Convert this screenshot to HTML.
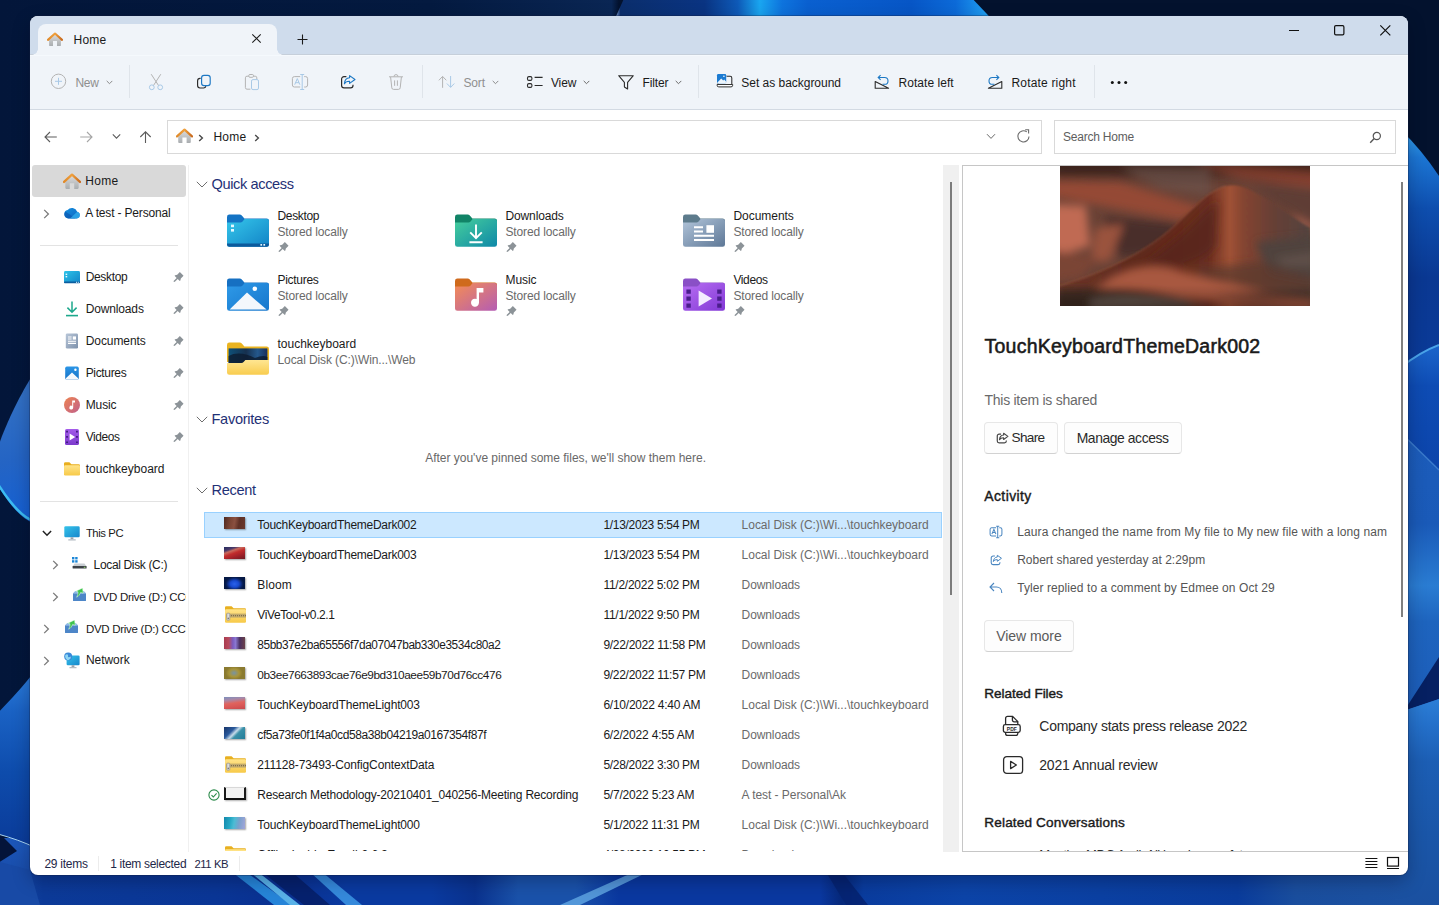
<!DOCTYPE html>
<html lang="en">
<head>
<meta charset="utf-8">
<title>Home - File Explorer</title>
<style>
*{box-sizing:border-box;margin:0;padding:0}
html,body{width:1439px;height:905px;overflow:hidden;background:#03163a}
body{font-family:"Liberation Sans",sans-serif;font-size:12px;color:#1a1a1a;position:relative}
.abs,.abs>*{position:absolute}
#wall{position:absolute;left:0;top:0;width:1439px;height:905px}
#win{position:absolute;left:30px;top:16px;width:1378px;height:859px;border-radius:8px;overflow:hidden;background:#fff;box-shadow:0 0 0 1px rgba(20,30,60,.3),0 6px 18px rgba(0,0,20,.28)}
#in{position:absolute;left:-30px;top:-16px;width:1439px;height:905px}
#in *{position:absolute}
.t{white-space:pre;line-height:16px;height:16px}
/* title bar */
#titlebar{left:30px;top:16px;width:1378px;height:39px;background:#cfdcec}
#tab{left:38px;top:24px;width:239px;height:31px;background:#f0f4f9;border-radius:8px 8px 0 0}
.tabfoot{width:6px;height:6px;top:49px;background:radial-gradient(circle at 0 0,rgba(0,0,0,0) 5.5px,#f0f4f9 6px)}
/* toolbar */
#toolbar{left:30px;top:55px;width:1378px;height:55px;background:#f0f4f9;border-bottom:1px solid #d3dae3}
.sep{width:1px;height:33px;top:65px;background:#dfe4ea}
.tb{top:74px;font-size:12px;color:#1a1a1a}
.dis{color:#9a9a9a}
/* nav */
.box{top:120px;height:34px;border:1px solid #d9d9d9;background:#fff}
/* sidebar */
.sb{left:85px;font-size:12px;color:#1a1a1a}
.hr{height:1px;background:#e3e3e3;left:40px;width:138px}
/* main */
.h{font-size:15px;color:#1f3278;line-height:20px;height:20px;white-space:pre}
.nm{color:#111}
.sub{color:#6d6d6d}
.row{left:204px;width:738px;height:26px}
.c1{left:257px}.c2{left:603px}.c3{left:741px;color:#6d6d6d}
/* preview */
.btn{border:1px solid #e7e7e7;border-bottom-color:#d2d2d2;border-radius:4px;background:#fdfdfd;height:32px}
.p14{font-size:14px;line-height:18px;height:18px;white-space:pre}
.p12{font-size:12px;line-height:16px;height:16px;white-space:pre;color:#505050}
.bold{font-weight:700}
</style>
</head>
<body>
<svg id="wall" viewBox="0 0 1439 905"><defs>
<linearGradient id="gBase" x1="0" x2="1439" y1="0" y2="0" gradientUnits="userSpaceOnUse"><stop offset="0" stop-color="#03163a"/><stop offset=".3" stop-color="#041a40"/><stop offset=".425" stop-color="#0a2654"/><stop offset=".43" stop-color="#03122e"/><stop offset="1" stop-color="#03122e"/></linearGradient>
<linearGradient id="gTop" x1="616" x2="985" y1="0" y2="0" gradientUnits="userSpaceOnUse">
<stop offset="0" stop-color="#7c9cd0"/><stop offset=".012" stop-color="#0b2e6c"/><stop offset=".24" stop-color="#0a3482"/><stop offset=".33" stop-color="#0e5ab8"/><stop offset=".39" stop-color="#1aa6f0"/><stop offset=".45" stop-color="#0e74de"/><stop offset=".52" stop-color="#0a60d0"/><stop offset=".8" stop-color="#0756c6"/><stop offset=".92" stop-color="#0c6ad8"/><stop offset="1" stop-color="#1e9cf0"/>
</linearGradient>
<linearGradient id="gL1" x1="0" x2="30" y1="400" y2="520" gradientUnits="userSpaceOnUse">
<stop offset="0" stop-color="#3270c4"/><stop offset=".5" stop-color="#2464c4"/><stop offset="1" stop-color="#1460d4"/>
</linearGradient>
<linearGradient id="gL2" x1="0" x2="0" y1="677" y2="850" gradientUnits="userSpaceOnUse">
<stop offset="0" stop-color="#2a7ad8"/><stop offset=".2" stop-color="#1a62c4"/><stop offset=".55" stop-color="#0e4cac"/><stop offset="1" stop-color="#0a3a98"/>
</linearGradient>
<linearGradient id="gBot" x1="0" x2="1439" y1="0" y2="0" gradientUnits="userSpaceOnUse">
<stop offset="0" stop-color="#1a4aa2"/><stop offset=".03" stop-color="#0c3a98"/><stop offset=".15" stop-color="#0a3696"/><stop offset=".2" stop-color="#0a3090"/><stop offset=".24" stop-color="#0a3aa0"/><stop offset=".3" stop-color="#0a3aa0"/><stop offset=".33" stop-color="#0a328e"/><stop offset=".36" stop-color="#1a52aa"/><stop offset=".4" stop-color="#1a52aa"/><stop offset=".43" stop-color="#0a38a0"/><stop offset=".57" stop-color="#0a38a0"/><stop offset=".585" stop-color="#06287a"/><stop offset=".6" stop-color="#0a3c9e"/><stop offset=".67" stop-color="#0c44a8"/><stop offset=".86" stop-color="#0a3c9c"/><stop offset=".9" stop-color="#1a4e9e"/><stop offset="1" stop-color="#1c52a2"/>
</linearGradient>
<linearGradient id="gR" x1="0" x2="0" y1="139" y2="905" gradientUnits="userSpaceOnUse">
<stop offset="0" stop-color="#2a94e6"/><stop offset=".03" stop-color="#1a72d0"/><stop offset=".1" stop-color="#0c48a8"/><stop offset=".2" stop-color="#0a3690"/><stop offset=".275" stop-color="#0a3a98"/><stop offset=".285" stop-color="#3a9ae2"/><stop offset=".3" stop-color="#0e4cb4"/><stop offset=".39" stop-color="#0c46ac"/><stop offset=".4" stop-color="#2a6cc4"/><stop offset=".42" stop-color="#1a5ab8"/><stop offset=".5" stop-color="#1a5ab8"/><stop offset=".57" stop-color="#2a7ad0"/><stop offset=".62" stop-color="#1e62bc"/><stop offset=".72" stop-color="#1c5cb8"/><stop offset=".74" stop-color="#2a7ad2"/><stop offset=".8" stop-color="#1c5eb2"/><stop offset=".9" stop-color="#1a56a8"/><stop offset="1" stop-color="#1a50a0"/>
</linearGradient>
<linearGradient id="gR1" x1="0" x2="0" y1="139" y2="370" gradientUnits="userSpaceOnUse"><stop offset="0" stop-color="#2e98e8"/><stop offset=".08" stop-color="#1c76d4"/><stop offset=".3" stop-color="#0e4eae"/><stop offset=".6" stop-color="#0a3892"/><stop offset="1" stop-color="#0a3a98"/></linearGradient>
<linearGradient id="gR2" x1="0" x2="0" y1="350" y2="470" gradientUnits="userSpaceOnUse"><stop offset="0" stop-color="#1a62c8"/><stop offset=".3" stop-color="#0e4cb4"/><stop offset="1" stop-color="#0c44aa"/></linearGradient>
<linearGradient id="gR3" x1="0" x2="0" y1="440" y2="720" gradientUnits="userSpaceOnUse"><stop offset="0" stop-color="#1c5cba"/><stop offset=".3" stop-color="#1a5ab8"/><stop offset=".52" stop-color="#2a7cd2"/><stop offset=".65" stop-color="#1e64be"/><stop offset="1" stop-color="#1c5cb8"/></linearGradient>
<linearGradient id="gR4" x1="0" x2="0" y1="700" y2="905" gradientUnits="userSpaceOnUse"><stop offset="0" stop-color="#2c7ed6"/><stop offset=".12" stop-color="#2470ca"/><stop offset=".3" stop-color="#1c5eb4"/><stop offset=".65" stop-color="#1a56a8"/><stop offset="1" stop-color="#1a50a0"/></linearGradient>
<linearGradient id="gLB" x1="0" x2="0" y1="845" y2="880" gradientUnits="userSpaceOnUse"><stop offset="0" stop-color="#1c56b8"/><stop offset="1" stop-color="#184aa6"/></linearGradient>
</defs>
<rect width="1439" height="905" fill="url(#gBase)"/>
<polygon points="626,-6 968,-6 1004,32 609,32" fill="url(#gTop)"/>
<path d="M34,373 C24,388 8,418 -2,447 L-2,486 C10,505 22,520 36,524 Z" fill="url(#gL1)"/>
<path d="M-2,484 C10,503 22,518 36,522" stroke="#3cbcf0" stroke-width="2.2" fill="none"/>
<path d="M-2,838 L40,838 L40,880 L-2,880Z" fill="url(#gLB)"/>
<path d="M-2,832 L17,851 L-2,863Z" fill="#04143a"/>
<path d="M34,672 C22,688 10,700 -2,713 L-2,834 C12,838 24,842 36,848 Z" fill="url(#gL2)"/>
<path d="M-2,834 C12,838 24,842 36,848" stroke="#a8d4f2" stroke-width="1" fill="none"/>
<rect x="0" y="872" width="1439" height="33" fill="url(#gBot)"/>
<path d="M0,862 L30,870 L40,905 L0,905Z" fill="#184aa6"/>
<g opacity=".9"><polygon points="232,872 246,872 292,905 274,905" fill="#2a8ee0"/><polygon points="250,872 258,872 300,905 290,905" fill="#62c0f2"/><polygon points="262,872 292,872 330,905 304,905" fill="#06206a"/><polygon points="310,872 322,872 362,905 346,905" fill="#3a92e2"/><polygon points="560,905 580,905 648,872 634,872" fill="#5a9ede"/><polygon points="826,872 842,872 868,905 846,905" fill="#052472"/></g>
<g>
<path d="M1400,129 Q1422,150 1439,176 L1439,905 L1400,905Z" fill="url(#gR1)"/>
<path d="M1400,368 Q1420,352 1439,345 L1439,480 L1400,440Z" fill="url(#gR2)"/>
<path d="M1400,368 Q1420,352 1439,345" stroke="#4aa4ea" stroke-width="2" fill="none"/>
<path d="M1400,432 L1439,470 L1439,720 L1400,720Z" fill="url(#gR3)"/>
<path d="M1400,432 L1439,470" stroke="#3a7acc" stroke-width="1.5" fill="none"/>
<polygon points="1404,711 1439,657 1439,699" fill="#062062"/>
<path d="M1400,712 L1439,699 L1439,905 L1400,905Z" fill="url(#gR4)"/>
</g>
</svg>
<div id="win"><div id="in">
<!-- p_top -->
<div id="titlebar"></div>
<div style="left:30px;top:54px;width:1378px;height:1px;background:#c6cfda"></div><div style="left:30px;top:55px;width:1378px;height:1px;background:#f5f9fd;z-index:1"></div>
<div id="tab"></div>
<div class="tabfoot" style="left:32px"></div>
<div class="tabfoot" style="left:277px;background:radial-gradient(circle at 100% 0,rgba(0,0,0,0) 5.5px,#f0f4f9 6px)"></div>
<svg style="left:47px;top:32px" width="16" height="15" viewBox="0 0 17 16"><defs><linearGradient id="hg" x1="0" y1="0" x2="0" y2="1"><stop offset="0" stop-color="#dcdcdc"/><stop offset="1" stop-color="#a9adb0"/></linearGradient><linearGradient id="ho" x1="0" y1="0" x2="1" y2="0"><stop offset="0" stop-color="#e08a2a"/><stop offset=".5" stop-color="#f0a03c"/><stop offset="1" stop-color="#c86a1e"/></linearGradient></defs><path d="M2.2 7.2 L8.5 2 L14.8 7.2 V14 a1 1 0 0 1 -1 1 H10.6 V9.6 H6.4 V15 H3.2 a1 1 0 0 1 -1 -1Z" fill="url(#hg)"/><path d="M1 8.4 L8.5 1.6 L16 8.4" fill="none" stroke="url(#ho)" stroke-width="2.2" stroke-linecap="round" stroke-linejoin="round"/></svg>
<svg style="left:251px;top:33px" width="11" height="11" viewBox="0 0 11 11"><path d="M1.3 1.3 L9.7 9.7 M9.7 1.3 L1.3 9.7" stroke="#1a1a1a" stroke-width="1.05" fill="none"/></svg>
<svg style="left:297px;top:34px" width="11" height="11" viewBox="0 0 11 11"><path d="M5.5 0.5 V10.5 M0.5 5.5 H10.5" stroke="#1a1a1a" stroke-width="1.1" fill="none"/></svg>
<svg style="left:1288px;top:24px" width="104" height="13" viewBox="0 0 104 13"><path d="M1 6.5 H11" stroke="#111" stroke-width="1.2" fill="none"/><rect x="46.6" y="1.6" width="9.3" height="9.3" rx="1.3" stroke="#111" stroke-width="1.2" fill="none"/><path d="M92.3 1.3 L102.3 11.3 M102.3 1.3 L92.3 11.3" stroke="#111" stroke-width="1.2" fill="none"/></svg>
<div id="toolbar"></div>
<div style="left:73.6px;top:29.84px;font-size:12px;line-height:20px;height:20px;white-space:pre;color:#1a1a1a;letter-spacing:0.197px;">Home</div>
<div class="sep" style="left:129px"></div>
<div class="sep" style="left:422px"></div>
<div class="sep" style="left:698px"></div>
<div class="sep" style="left:1094px"></div>
<svg style="left:50px;top:73px" width="17" height="17" viewBox="0 0 17 17"><circle cx="8.5" cy="8.3" r="7.2" stroke="#b3b3b3" stroke-width="1" fill="none"/><path d="M8.5 4.8 V11.8 M5 8.3 H12" stroke="#a9c9e6" stroke-width="1" fill="none"/></svg>
<div style="left:75.5px;top:72.84px;font-size:12px;line-height:20px;height:20px;white-space:pre;color:#8f8f8f;letter-spacing:-0.353px;">New</div>
<svg style="left:105.7px;top:80px" width="7" height="5" viewBox="0 0 7 5"><path d="M0.7 0.9 L3.5 3.7 L6.3 0.9" stroke="#8a8a8a" stroke-width="1" fill="none"/></svg>
<svg style="left:148px;top:73px" width="16" height="18" viewBox="0 0 16 18"><path d="M3.2 1.2 L10.6 12.6 M12.8 1.2 L5.4 12.6" stroke="#b3b3b3" stroke-width="1" fill="none"/><circle cx="3.8" cy="14.3" r="2.4" stroke="#a9c9e6" stroke-width="1" fill="none"/><circle cx="12.2" cy="14.3" r="2.4" stroke="#a9c9e6" stroke-width="1" fill="none"/></svg>
<svg style="left:196px;top:74px" width="16" height="16" viewBox="0 0 16 16"><path d="M4.6 4.3 H4 a2.4 2.4 0 0 0 -2.4 2.4 V11.6 a2.4 2.4 0 0 0 2.4 2.4 H7.6 a2.4 2.4 0 0 0 2.3 -1.8" stroke="#2b2b2b" stroke-width="1.15" fill="none"/><rect x="5.6" y="1.4" width="8.6" height="10.2" rx="2.4" stroke="#1d78c4" stroke-width="1.15" fill="none"/></svg>
<svg style="left:244px;top:73px" width="16" height="18" viewBox="0 0 16 18"><path d="M4.6 3.2 H3 a1.6 1.6 0 0 0 -1.6 1.6 V14.6 a1.6 1.6 0 0 0 1.6 1.6 H6.4 M9.6 3.2 H11.2 a1.6 1.6 0 0 1 1.6 1.6 V6.2" stroke="#b3b3b3" stroke-width="1" fill="none"/><rect x="4.7" y="1.5" width="4.8" height="2.8" rx="1.2" stroke="#b3b3b3" stroke-width="1" fill="none"/><rect x="7.5" y="6.6" width="7" height="10" rx="1.5" stroke="#a9c9e6" stroke-width="1" fill="none"/></svg>
<svg style="left:291px;top:73px" width="18" height="18" viewBox="0 0 18 18"><path d="M9.2 3.6 H3.4 a2 2 0 0 0 -2 2 V12 a2 2 0 0 0 2 2 H9.2 M13.2 3.6 H14.6 a2 2 0 0 1 2 2 V12 a2 2 0 0 1 -2 2 H13.2" stroke="#b3b3b3" stroke-width="1" fill="none"/><path d="M9.2 1.5 H13.2 M9.2 16.5 H13.2 M11.2 1.5 V16.5" stroke="#a9c9e6" stroke-width="1" fill="none"/><path d="M3.7 11.7 L6.3 5.6 L8.9 11.7 M4.6 9.7 H8" stroke="#a9c9e6" stroke-width="1" fill="none"/></svg>
<svg style="left:340px;top:74px" width="17" height="16" viewBox="0 0 17 16"><path d="M6.4 2.6 H4 a2.4 2.4 0 0 0 -2.4 2.4 V11.4 a2.4 2.4 0 0 0 2.4 2.4 H10.6 a2.4 2.4 0 0 0 2.4 -2.4 V10.8" stroke="#2b2b2b" stroke-width="1.2" fill="none"/><path d="M9.6 1.6 L15 5.5 L9.6 9.4 V7.3 C7 7.2 5.4 8 4.4 9.8 C4.6 6.6 6.4 4 9.6 3.8 Z" stroke="#1d78c4" stroke-width="1.1" fill="none" stroke-linejoin="round"/></svg>
<svg style="left:388px;top:73px" width="16" height="18" viewBox="0 0 16 18"><path d="M1 3.8 H15 M6 3.6 a2 2 0 0 1 4 0" stroke="#b3b3b3" stroke-width="1" fill="none"/><path d="M2.6 4 L3.8 14.8 a1.8 1.8 0 0 0 1.8 1.6 H10.4 a1.8 1.8 0 0 0 1.8 -1.6 L13.4 4 M6.6 7.4 V12.8 M9.4 7.4 V12.8" stroke="#b3b3b3" stroke-width="1" fill="none"/></svg>
<svg style="left:438px;top:75px" width="18" height="14" viewBox="0 0 18 14"><path d="M4.6 12.8 V1.6 M0.9 5.3 L4.6 1.4 L8.3 5.3" stroke="#b3b3b3" stroke-width="1" fill="none"/><path d="M12.6 1 V12.2 M8.9 8.5 L12.6 12.4 L16.3 8.5" stroke="#a9c9e6" stroke-width="1" fill="none"/></svg>
<div style="left:463.5px;top:72.84px;font-size:12px;line-height:20px;height:20px;white-space:pre;color:#8f8f8f;letter-spacing:-0.169px;">Sort</div>
<svg style="left:491.9px;top:80px" width="7" height="5" viewBox="0 0 7 5"><path d="M0.7 0.9 L3.5 3.7 L6.3 0.9" stroke="#8a8a8a" stroke-width="1" fill="none"/></svg>
<svg style="left:526px;top:75px" width="18" height="14" viewBox="0 0 18 14"><rect x="1.5" y="1.6" width="4.4" height="3.8" rx="1.4" stroke="#2b2b2b" stroke-width="1.1" fill="none"/><rect x="1.5" y="8.6" width="4.4" height="3.8" rx="1.4" stroke="#2b2b2b" stroke-width="1.1" fill="none"/><path d="M8.6 2.4 H16.6 M8.6 10.5 H16.6" stroke="#2b2b2b" stroke-width="1.1" fill="none"/></svg>
<div style="left:551px;top:72.84px;font-size:12px;line-height:20px;height:20px;white-space:pre;color:#1a1a1a;letter-spacing:-0.164px;">View</div>
<svg style="left:582.7px;top:80px" width="7" height="5" viewBox="0 0 7 5"><path d="M0.7 0.9 L3.5 3.7 L6.3 0.9" stroke="#6a6a6a" stroke-width="1" fill="none"/></svg>
<svg style="left:617px;top:74px" width="18" height="17" viewBox="0 0 18 17"><path d="M1.7 1.7 H16.3 L10.6 8.4 V15 L7.4 13 V8.4 Z" stroke="#2b2b2b" stroke-width="1.1" fill="none" stroke-linejoin="round"/></svg>
<div style="left:642.5px;top:72.84px;font-size:12px;line-height:20px;height:20px;white-space:pre;color:#1a1a1a;letter-spacing:-0.133px;">Filter</div>
<svg style="left:674.8px;top:80px" width="7" height="5" viewBox="0 0 7 5"><path d="M0.7 0.9 L3.5 3.7 L6.3 0.9" stroke="#6a6a6a" stroke-width="1" fill="none"/></svg>
<svg style="left:716px;top:73px" width="18" height="16" viewBox="0 0 18 16"><path d="M10.5 3.3 H14.2 a1.6 1.6 0 0 1 1.6 1.6 V11.4 M2 10.4 V11.4" stroke="#2b2b2b" stroke-width="1.05" fill="none"/><path d="M1.1 11.5 H16.7 V12.2 a1.7 1.7 0 0 1 -1.7 1.7 H2.8 a1.7 1.7 0 0 1 -1.7 -1.7Z" stroke="#2b2b2b" stroke-width=".95" fill="#fbfcfe"/><rect x="1" y="1" width="9.2" height="9.2" rx="1.2" fill="#1b7bd2"/><path d="M1.4 9.6 L5.2 5.6 L7.2 7.4 L8.2 6.6 L10 8.6 V9.2 a1 1 0 0 1 -1 1 H2 Z" fill="#fff" opacity=".92"/><circle cx="7.9" cy="3.2" r=".8" fill="#fff"/></svg>
<div style="left:741.3px;top:72.84px;font-size:12px;line-height:20px;height:20px;white-space:pre;color:#1a1a1a;letter-spacing:-0.023px;">Set as background</div>
<svg style="left:874px;top:74px" width="17" height="16" viewBox="0 0 17 16"><path d="M1.2 7.6 V14.2 H14.6 Z" stroke="#2b2b2b" stroke-width="1.1" fill="none" stroke-linejoin="round"/><path d="M4.2 3.5 H10.6 a3.4 3.4 0 0 1 0 6.8 H8.6 M6.6 1.2 L4.2 3.5 L6.6 5.8" stroke="#1d78c4" stroke-width="1.1" fill="none"/></svg>
<div style="left:898.5px;top:72.84px;font-size:12px;line-height:20px;height:20px;white-space:pre;color:#1a1a1a;letter-spacing:0.050px;">Rotate left</div>
<svg style="left:986px;top:74px" width="17" height="16" viewBox="0 0 17 16"><path d="M15.8 7.6 V14.2 H2.4 Z" stroke="#2b2b2b" stroke-width="1.1" fill="none" stroke-linejoin="round"/><path d="M12.8 3.5 H6.4 a3.4 3.4 0 0 0 0 6.8 H8.4 M10.4 1.2 L12.8 3.5 L10.4 5.8" stroke="#1d78c4" stroke-width="1.1" fill="none"/></svg>
<div style="left:1011.5px;top:72.84px;font-size:12px;line-height:20px;height:20px;white-space:pre;color:#1a1a1a;letter-spacing:0.179px;">Rotate right</div>
<svg style="left:1110px;top:80px" width="18" height="5" viewBox="0 0 18 5"><circle cx="2.3" cy="2.5" r="1.5" fill="#111"/><circle cx="9" cy="2.5" r="1.5" fill="#111"/><circle cx="15.7" cy="2.5" r="1.5" fill="#111"/></svg>
<!-- p_nav -->
<svg style="left:44px;top:131px" width="14" height="12" viewBox="0 0 14 12"><path d="M12.8 6 H1.2 M6 1 L1 6 L6 11" stroke="#5c5c5c" stroke-width="1.1" fill="none"/></svg>
<svg style="left:79px;top:131px" width="14" height="12" viewBox="0 0 14 12"><path d="M1.2 6 H12.8 M8 1 L13 6 L8 11" stroke="#a6a6a6" stroke-width="1.1" fill="none"/></svg>
<svg style="left:112px;top:133px" width="9" height="7" viewBox="0 0 9 7"><path d="M0.8 1.4 L4.5 5.2 L8.2 1.4" stroke="#5c5c5c" stroke-width="1.1" fill="none"/></svg>
<svg style="left:139px;top:131px" width="13" height="13" viewBox="0 0 13 13"><path d="M6.5 12 V1 M1.3 6 L6.5 0.8 L11.7 6" stroke="#5c5c5c" stroke-width="1.1" fill="none"/></svg>
<div class="box" style="left:167px;width:875px"></div>
<div class="box" style="left:1054px;width:342px"></div>
<svg style="left:175.5px;top:128.4px" width="17" height="16" viewBox="0 0 17 16"><path d="M2.2 7.2 L8.5 2 L14.8 7.2 V14 a1 1 0 0 1 -1 1 H10.6 V9.6 H6.4 V15 H3.2 a1 1 0 0 1 -1 -1Z" fill="url(#hg)"/><path d="M1 8.4 L8.5 1.6 L16 8.4" fill="none" stroke="url(#ho)" stroke-width="2.2" stroke-linecap="round" stroke-linejoin="round"/></svg>
<svg style="left:198px;top:134px" width="6" height="8" viewBox="0 0 6 8"><path d="M1.2 0.9 L4.4 4 L1.2 7.1" stroke="#4a4a4a" stroke-width="1.4" fill="none"/></svg>
<svg style="left:254px;top:134px" width="6" height="8" viewBox="0 0 6 8"><path d="M1.2 0.9 L4.4 4 L1.2 7.1" stroke="#4a4a4a" stroke-width="1.4" fill="none"/></svg>
<svg style="left:986px;top:133px" width="10" height="7" viewBox="0 0 10 7"><path d="M1 1.2 L5 5.4 L9 1.2" stroke="#6a6a6a" stroke-width="1" fill="none"/></svg>
<svg style="left:1016px;top:129px" width="15" height="15" viewBox="0 0 15 15"><path d="M13 7.4 a5.6 5.6 0 1 1 -2.2 -4.5" stroke="#6a6a6a" stroke-width="1.1" fill="none"/><path d="M9.2 0.8 H12.6 V4.4" stroke="#6a6a6a" stroke-width="1.1" fill="none"/></svg>
<svg style="left:1369px;top:131px" width="13" height="13" viewBox="0 0 13 13"><circle cx="7.8" cy="5" r="3.6" stroke="#555" stroke-width="1.2" fill="none"/><path d="M5.2 7.6 L1.2 11.8" stroke="#555" stroke-width="1.4" fill="none"/></svg>
<div style="left:213.4px;top:127.14px;font-size:12px;line-height:20px;height:20px;white-space:pre;color:#1a1a1a;letter-spacing:0.230px;">Home</div>
<div style="left:1063px;top:127.14px;font-size:12px;line-height:20px;height:20px;white-space:pre;color:#5e5e5e;letter-spacing:-0.217px;">Search Home</div>
<!-- p_side -->
<div style="left:32px;top:165px;width:154px;height:32px;background:#d9d9d9;border-radius:3px"></div>
<div style="left:188px;top:165px;width:1px;height:687px;background:#f0f0f0"></div>
<div class="hr" style="top:245px"></div><div class="hr" style="top:501px"></div>
<svg style="left:63px;top:173px" width="18" height="17" viewBox="0 0 17 16"><path d="M2.2 7.2 L8.5 2 L14.8 7.2 V14 a1 1 0 0 1 -1 1 H10.6 V9.6 H6.4 V15 H3.2 a1 1 0 0 1 -1 -1Z" fill="url(#hg)"/><path d="M1 8.4 L8.5 1.6 L16 8.4" fill="none" stroke="url(#ho)" stroke-width="2.2" stroke-linecap="round" stroke-linejoin="round"/></svg>
<div style="left:85.3px;top:170.84px;font-size:12px;line-height:20px;height:20px;white-space:pre;color:#1a1a1a;letter-spacing:0.330px;">Home</div>
<svg style="left:43px;top:209px" width="7" height="10" viewBox="0 0 7 10"><path d="M1.2 0.9 L5.4 5 L1.2 9.1" stroke="#7a7a7a" stroke-width="1.3" fill="none"/></svg>
<svg style="left:63px;top:207px" width="18" height="12" viewBox="0 0 18 12"><defs><linearGradient id="od" x1="0" y1="0" x2="1" y2="1"><stop offset="0" stop-color="#1490df"/><stop offset="1" stop-color="#0f64c0"/></linearGradient></defs><path d="M5.2 11.4 a4.2 4.2 0 0 1 -.6 -8.3 a5.6 5.6 0 0 1 9.6 1.6 a3.4 3.4 0 0 1 -.4 6.7 Z" fill="url(#od)"/><path d="M5.2 11.4 a4.2 4.2 0 0 1 -2.8 -7 L12.6 11.4Z" fill="#0a4fa8" opacity=".55"/><path d="M7 11.4 L14.2 4.7 a3.4 3.4 0 0 1 -.4 6.7Z" fill="#35b6f2" opacity=".7"/></svg>
<div style="left:85.3px;top:202.64px;font-size:12px;line-height:20px;height:20px;white-space:pre;color:#1a1a1a;letter-spacing:-0.165px;">A test - Personal</div>
<svg style="left:64px;top:271px" width="16" height="13" viewBox="0 0 16 13"><defs><linearGradient id="dk" x1="0" y1="0" x2="1" y2="1"><stop offset="0" stop-color="#2cc3e8"/><stop offset="1" stop-color="#1285c8"/></linearGradient></defs><rect x="0" y="0" width="16" height="12" rx="1.4" fill="url(#dk)"/><rect x="0" y="10.4" width="16" height="1.8" rx=".8" fill="#0b5d9e"/><rect x="1.6" y="2.6" width="1.6" height="1.4" fill="#e8f8ff"/><rect x="1.6" y="5" width="1.6" height="1.4" fill="#e8f8ff"/><rect x="12" y="10.8" width="1" height="1" fill="#e8f8ff"/><rect x="13.8" y="10.8" width="1" height="1" fill="#e8f8ff"/></svg>
<div style="left:85.7px;top:266.64px;font-size:12px;line-height:20px;height:20px;white-space:pre;color:#1a1a1a;letter-spacing:-0.337px;">Desktop</div>
<svg style="left:172.5px;top:272px" width="11" height="11" viewBox="0 0 11 11"><path transform="translate(8.7 1.9) rotate(45)" d="M-2.6 0 H2.6 V3.8 L3.7 5.6 V6.4 H0.75 V10.4 L0 11.4 L-0.75 10.4 V6.4 H-3.7 V5.6 L-2.6 3.8Z" fill="#8c9398"/></svg>
<svg style="left:65px;top:301px" width="14" height="16" viewBox="0 0 14 16"><path d="M7 0.6 V11 M2.4 6.6 L7 11.2 L11.6 6.6" stroke="#1da88c" stroke-width="1.5" fill="none"/><path d="M1 14.6 H13" stroke="#1da88c" stroke-width="1.6"/></svg>
<div style="left:85.7px;top:298.64px;font-size:12px;line-height:20px;height:20px;white-space:pre;color:#1a1a1a;letter-spacing:-0.146px;">Downloads</div>
<svg style="left:172.5px;top:304px" width="11" height="11" viewBox="0 0 11 11"><path transform="translate(8.7 1.9) rotate(45)" d="M-2.6 0 H2.6 V3.8 L3.7 5.6 V6.4 H0.75 V10.4 L0 11.4 L-0.75 10.4 V6.4 H-3.7 V5.6 L-2.6 3.8Z" fill="#8c9398"/></svg>
<svg style="left:65px;top:333px" width="14" height="16" viewBox="0 0 14 16"><defs><linearGradient id="dc" x1="0" y1="0" x2="1" y2="1"><stop offset="0" stop-color="#b8c6d8"/><stop offset="1" stop-color="#7d91ab"/></linearGradient></defs><rect x=".8" y=".4" width="12.2" height="15.2" rx="1.4" fill="url(#dc)"/><path d="M3 4 H6.6 M3 6 H6.6 M3 8.2 H11 M3 10.4 H11" stroke="#fff" stroke-width="1.1"/><rect x="7.8" y="3.4" width="3.2" height="3.2" fill="#fff"/></svg>
<div style="left:85.7px;top:330.64px;font-size:12px;line-height:20px;height:20px;white-space:pre;color:#1a1a1a;letter-spacing:-0.074px;">Documents</div>
<svg style="left:172.5px;top:336px" width="11" height="11" viewBox="0 0 11 11"><path transform="translate(8.7 1.9) rotate(45)" d="M-2.6 0 H2.6 V3.8 L3.7 5.6 V6.4 H0.75 V10.4 L0 11.4 L-0.75 10.4 V6.4 H-3.7 V5.6 L-2.6 3.8Z" fill="#8c9398"/></svg>
<svg style="left:65px;top:366px" width="14" height="14" viewBox="0 0 14 14"><defs><linearGradient id="pc" x1="0" y1="0" x2="0" y2="1"><stop offset="0" stop-color="#2b95e6"/><stop offset="1" stop-color="#1572c6"/></linearGradient></defs><rect x=".2" y=".6" width="13.6" height="13" rx="1.6" fill="url(#pc)"/><path d="M.8 12.2 L7 6.4 L13.2 12.2 a1.4 1.4 0 0 1 -1 1.4 H1.8 a1.4 1.4 0 0 1 -1 -1.4Z" fill="#f4f8fc"/><circle cx="10.4" cy="3.8" r="1.2" fill="#fff"/></svg>
<div style="left:85.7px;top:362.64px;font-size:12px;line-height:20px;height:20px;white-space:pre;color:#1a1a1a;letter-spacing:-0.335px;">Pictures</div>
<svg style="left:172.5px;top:368px" width="11" height="11" viewBox="0 0 11 11"><path transform="translate(8.7 1.9) rotate(45)" d="M-2.6 0 H2.6 V3.8 L3.7 5.6 V6.4 H0.75 V10.4 L0 11.4 L-0.75 10.4 V6.4 H-3.7 V5.6 L-2.6 3.8Z" fill="#8c9398"/></svg>
<svg style="left:64px;top:397px" width="16" height="16" viewBox="0 0 16 16"><defs><linearGradient id="mu" x1="0" y1="0" x2="1" y2="1"><stop offset="0" stop-color="#ee8450"/><stop offset="1" stop-color="#c0608c"/></linearGradient></defs><circle cx="8" cy="8" r="8" fill="url(#mu)"/><path d="M8.2 3.4 H11 V5.4 H9.2 V10.6 a1.9 1.9 0 1 1 -1 -1.7Z" fill="#fff"/></svg>
<div style="left:85.7px;top:394.64px;font-size:12px;line-height:20px;height:20px;white-space:pre;color:#1a1a1a;letter-spacing:-0.109px;">Music</div>
<svg style="left:172.5px;top:400px" width="11" height="11" viewBox="0 0 11 11"><path transform="translate(8.7 1.9) rotate(45)" d="M-2.6 0 H2.6 V3.8 L3.7 5.6 V6.4 H0.75 V10.4 L0 11.4 L-0.75 10.4 V6.4 H-3.7 V5.6 L-2.6 3.8Z" fill="#8c9398"/></svg>
<svg style="left:65px;top:429px" width="14" height="16" viewBox="0 0 14 16"><defs><linearGradient id="vd" x1="0" y1="0" x2="0" y2="1"><stop offset="0" stop-color="#a45cea"/><stop offset="1" stop-color="#7c3acc"/></linearGradient></defs><rect x="0" y="0" width="14" height="16" rx="1.6" fill="url(#vd)"/><path d="M1.2 1.8 h1.7 v1.7 h-1.7z M1.2 7.1 h1.7 v1.7 h-1.7z M1.2 12.4 h1.7 v1.7 h-1.7z M11.1 1.8 h1.7 v1.7 h-1.7z M11.1 7.1 h1.7 v1.7 h-1.7z M11.1 12.4 h1.7 v1.7 h-1.7z" fill="#3a1a78"/><path d="M4.6 4.6 L10.2 8 L4.6 11.4Z" fill="#fff"/></svg>
<div style="left:85.7px;top:426.66px;font-size:11.94px;line-height:20px;height:20px;white-space:pre;color:#1a1a1a;letter-spacing:-0.420px;">Videos</div>
<svg style="left:172.5px;top:432px" width="11" height="11" viewBox="0 0 11 11"><path transform="translate(8.7 1.9) rotate(45)" d="M-2.6 0 H2.6 V3.8 L3.7 5.6 V6.4 H0.75 V10.4 L0 11.4 L-0.75 10.4 V6.4 H-3.7 V5.6 L-2.6 3.8Z" fill="#8c9398"/></svg>
<svg style="left:64px;top:461.6px" width="16" height="14" viewBox="0 0 16 14"><defs><linearGradient id="fy" x1="0" y1="0" x2="0" y2="1"><stop offset="0" stop-color="#ffe48a"/><stop offset="1" stop-color="#f7c948"/></linearGradient></defs><path d="M0 1.6 a1.4 1.4 0 0 1 1.4 -1.4 H5.4 L7.4 2.2 H14.6 a1.4 1.4 0 0 1 1.4 1.4 V5 H0Z" fill="#e9ae1d"/><rect x="0" y="3.2" width="16" height="10.4" rx="1.3" fill="url(#fy)"/></svg>
<div style="left:85.7px;top:458.64px;font-size:12px;line-height:20px;height:20px;white-space:pre;color:#1a1a1a;letter-spacing:0.007px;">touchkeyboard</div>
<svg style="left:41.5px;top:529.5px" width="10" height="7" viewBox="0 0 10 7"><path d="M0.9 1 L5 5.2 L9.1 1" stroke="#222" stroke-width="1.5" fill="none"/></svg>
<svg style="left:64px;top:526px" width="16" height="15" viewBox="0 0 16 15"><defs><linearGradient id="tp" x1="0" y1="0" x2="1" y2="1"><stop offset="0" stop-color="#35c3ea"/><stop offset="1" stop-color="#1787cc"/></linearGradient></defs><rect x=".3" y=".3" width="15.4" height="11" rx="1.3" fill="url(#tp)"/><rect x="6.6" y="11.3" width="2.8" height="2" fill="#9aa3ac"/><rect x="4.2" y="13.2" width="7.6" height="1.3" rx=".5" fill="#b4bcc4"/></svg>
<div style="left:85.9px;top:522.98px;font-size:11.31px;line-height:20px;height:20px;white-space:pre;color:#1a1a1a;letter-spacing:-0.420px;">This PC</div>
<svg style="left:51.5px;top:560px" width="7" height="10" viewBox="0 0 7 10"><path d="M1.2 0.9 L5.4 5 L1.2 9.1" stroke="#7a7a7a" stroke-width="1.3" fill="none"/></svg>
<svg style="left:72px;top:556.6px" width="15" height="12" viewBox="0 0 15 12"><rect x="0" y="0" width="2.4" height="2.4" fill="#1b86d6"/><rect x="3.2" y="0" width="2.4" height="2.4" fill="#1b86d6"/><rect x="0" y="3.2" width="2.4" height="2.4" fill="#1b86d6"/><rect x="3.2" y="3.2" width="2.4" height="2.4" fill="#1b86d6"/><path d="M2.6 6.6 H12.4 L14.6 9.2 H.6Z" fill="#c9ced3"/><rect x=".6" y="9" width="14" height="2.6" rx=".6" fill="#3d4248"/><rect x="11.8" y="9.8" width="1.6" height=".9" fill="#9fe870"/></svg>
<div style="left:93.6px;top:554.64px;font-size:12px;line-height:20px;height:20px;white-space:pre;color:#1a1a1a;letter-spacing:-0.349px;">Local Disk (C:)</div>
<svg style="left:51.5px;top:592px" width="7" height="10" viewBox="0 0 7 10"><path d="M1.2 0.9 L5.4 5 L1.2 9.1" stroke="#7a7a7a" stroke-width="1.3" fill="none"/></svg>
<svg style="left:73px;top:588px" width="13" height="13.2" viewBox="0 0 13 13.2"><path d="M0 5.2 H13 V12.4 a.8 .8 0 0 1 -.8 .8 H.8 a.8 .8 0 0 1 -.8 -.8Z" fill="#4d86c8"/><path d="M0 5.2 L2.2 3 H10.8 L13 5.2Z" fill="#8cb8e6"/><path d="M9.6 0 L10.2 5.2 L7.6 4.4 C6.8 6.6 5.6 8.4 3.6 9.2 C4.6 7.6 5 6 5 3.8 L2.8 3.2 Z" fill="#3fc24e" stroke="#e8ffe8" stroke-width=".5"/></svg>
<div style="left:93.6px;top:580px;width:92.9px;height:36px;overflow:hidden"><div style="left:0px;top:6.82px;font-size:11.5px;line-height:20px;height:20px;white-space:pre;color:#1a1a1a;letter-spacing:-0.279px;">DVD Drive (D:) CCCOMA</div>
</div>
<svg style="left:43px;top:624px" width="7" height="10" viewBox="0 0 7 10"><path d="M1.2 0.9 L5.4 5 L1.2 9.1" stroke="#7a7a7a" stroke-width="1.3" fill="none"/></svg>
<svg style="left:65px;top:620px" width="13" height="13.2" viewBox="0 0 13 13.2"><path d="M0 5.2 H13 V12.4 a.8 .8 0 0 1 -.8 .8 H.8 a.8 .8 0 0 1 -.8 -.8Z" fill="#4d86c8"/><path d="M0 5.2 L2.2 3 H10.8 L13 5.2Z" fill="#8cb8e6"/><path d="M9.6 0 L10.2 5.2 L7.6 4.4 C6.8 6.6 5.6 8.4 3.6 9.2 C4.6 7.6 5 6 5 3.8 L2.8 3.2 Z" fill="#3fc24e" stroke="#e8ffe8" stroke-width=".5"/></svg>
<div style="left:85.9px;top:612px;width:100.6px;height:36px;overflow:hidden"><div style="left:0px;top:6.82px;font-size:11.5px;line-height:20px;height:20px;white-space:pre;color:#1a1a1a;letter-spacing:-0.279px;">DVD Drive (D:) CCCOMA</div>
</div>
<svg style="left:43px;top:656px" width="7" height="10" viewBox="0 0 7 10"><path d="M1.2 0.9 L5.4 5 L1.2 9.1" stroke="#7a7a7a" stroke-width="1.3" fill="none"/></svg>
<svg style="left:64px;top:652px" width="16" height="17" viewBox="0 0 16 17"><rect x="2.6" y="3.6" width="13" height="9.6" rx="1.2" fill="url(#tp)"/><rect x="7.6" y="13.2" width="2.8" height="2" fill="#9aa3ac"/><rect x="5.4" y="15" width="7.2" height="1.3" rx=".5" fill="#b4bcc4"/><circle cx="4.2" cy="4.4" r="4" fill="#3a8ad8"/><path d="M1.4 3 C2.8 1.4 4.6 2.6 4 4.2 C3.6 5.4 5.4 5.8 6.6 4.6 C7.4 6.4 5.4 8 4 8.2 C2 7.6 .6 5.2 1.4 3Z" fill="#8fd6f4"/></svg>
<div style="left:85.9px;top:650.34px;font-size:12px;line-height:20px;height:20px;white-space:pre;color:#1a1a1a;letter-spacing:-0.035px;">Network</div>
<!-- p_main -->
<svg style="left:195.5px;top:180.5px" width="12" height="7" viewBox="0 0 12 7"><path d="M0.8 0.8 L6 6 L11.2 0.8" stroke="#6e6e6e" stroke-width="1" fill="none"/></svg>
<div style="left:211.5px;top:174.04px;font-size:14.6px;line-height:20px;height:20px;white-space:pre;color:#1f3176;letter-spacing:-0.383px;">Quick access</div>
<svg style="left:195.5px;top:415.5px" width="12" height="7" viewBox="0 0 12 7"><path d="M0.8 0.8 L6 6 L11.2 0.8" stroke="#6e6e6e" stroke-width="1" fill="none"/></svg>
<div style="left:211.5px;top:409.04px;font-size:14.6px;line-height:20px;height:20px;white-space:pre;color:#1f3176;letter-spacing:-0.292px;">Favorites</div>
<svg style="left:195.5px;top:486.5px" width="12" height="7" viewBox="0 0 12 7"><path d="M0.8 0.8 L6 6 L11.2 0.8" stroke="#6e6e6e" stroke-width="1" fill="none"/></svg>
<div style="left:211.5px;top:480.04px;font-size:14.6px;line-height:20px;height:20px;white-space:pre;color:#1f3176;letter-spacing:-0.332px;">Recent</div>
<div style="left:425.2px;top:447.94px;font-size:12px;line-height:20px;height:20px;white-space:pre;color:#686868;letter-spacing:-0.011px;">After you've pinned some files, we'll show them here.</div>
<svg style="left:227px;top:214px" width="42" height="33" viewBox="0 0 42 33"><defs><linearGradient id="fDesk" x1="0" y1="0" x2="1" y2="1"><stop offset="0" stop-color="#35c6ea"/><stop offset="1" stop-color="#1283c6"/></linearGradient></defs><path d="M0 3 a2.4 2.4 0 0 1 2.4 -2.4 H12.6 a3 3 0 0 1 2.2 1 L17.4 4.4 H39.6 a2.4 2.4 0 0 1 2.4 2.4 V12 H0Z" fill="#1473c4"/><path d="M0 8.4 H13.4 a3 3 0 0 0 2.2 -1 L17.6 5 H39.6 a2.4 2.4 0 0 1 2.4 2.4 V30.4 a2.4 2.4 0 0 1 -2.4 2.4 H2.4 a2.4 2.4 0 0 1 -2.4 -2.4Z" fill="url(#fDesk)"/><path d="M0 29.4 H42 V30.4 a2.4 2.4 0 0 1 -2.4 2.4 H2.4 a2.4 2.4 0 0 1 -2.4 -2.4Z" fill="#0c5a9c"/><rect x="4" y="10.6" width="3" height="2.6" fill="#e6f8ff"/><rect x="4" y="15" width="3" height="2.6" fill="#e6f8ff"/><rect x="33.4" y="30" width="1.7" height="1.7" fill="#e6f8ff"/><rect x="36.4" y="30" width="1.7" height="1.7" fill="#e6f8ff"/></svg>
<svg style="left:455px;top:214px" width="42" height="33" viewBox="0 0 42 33"><defs><linearGradient id="fDown" x1="0" y1="0" x2="1" y2="1"><stop offset="0" stop-color="#46cf9c"/><stop offset="1" stop-color="#0e88a8"/></linearGradient></defs><path d="M0 3 a2.4 2.4 0 0 1 2.4 -2.4 H12.6 a3 3 0 0 1 2.2 1 L17.4 4.4 H39.6 a2.4 2.4 0 0 1 2.4 2.4 V12 H0Z" fill="#118467"/><path d="M0 8.4 H13.4 a3 3 0 0 0 2.2 -1 L17.6 5 H39.6 a2.4 2.4 0 0 1 2.4 2.4 V30.4 a2.4 2.4 0 0 1 -2.4 2.4 H2.4 a2.4 2.4 0 0 1 -2.4 -2.4Z" fill="url(#fDown)"/><path d="M21 10.6 V24 M15.2 18.4 L21 24.2 L26.8 18.4" stroke="#fff" stroke-width="1.9" fill="none"/><path d="M14.4 28.2 H27.6" stroke="#fff" stroke-width="1.9"/></svg>
<svg style="left:683px;top:214px" width="42" height="33" viewBox="0 0 42 33"><defs><linearGradient id="fDoc" x1="0" y1="0" x2="1" y2="1"><stop offset="0" stop-color="#b2c5da"/><stop offset="1" stop-color="#5d7796"/></linearGradient></defs><path d="M0 3 a2.4 2.4 0 0 1 2.4 -2.4 H12.6 a3 3 0 0 1 2.2 1 L17.4 4.4 H39.6 a2.4 2.4 0 0 1 2.4 2.4 V12 H0Z" fill="#5d7b8c"/><path d="M0 8.4 H13.4 a3 3 0 0 0 2.2 -1 L17.6 5 H39.6 a2.4 2.4 0 0 1 2.4 2.4 V30.4 a2.4 2.4 0 0 1 -2.4 2.4 H2.4 a2.4 2.4 0 0 1 -2.4 -2.4Z" fill="url(#fDoc)"/><path d="M11 13.2 H20 M11 17.4 H20 M11 21.8 H31 M11 26 H31" stroke="#fff" stroke-width="2"/><rect x="23.4" y="11.2" width="7.6" height="7.6" fill="#fff"/></svg>
<svg style="left:227px;top:278px" width="42" height="33" viewBox="0 0 42 33"><defs><linearGradient id="fPic" x1="0" y1="0" x2="1" y2="1"><stop offset="0" stop-color="#2f9ae8"/><stop offset="1" stop-color="#1676cc"/></linearGradient></defs><path d="M0 3 a2.4 2.4 0 0 1 2.4 -2.4 H12.6 a3 3 0 0 1 2.2 1 L17.4 4.4 H39.6 a2.4 2.4 0 0 1 2.4 2.4 V12 H0Z" fill="#1670c2"/><path d="M0 8.4 H13.4 a3 3 0 0 0 2.2 -1 L17.6 5 H39.6 a2.4 2.4 0 0 1 2.4 2.4 V30.4 a2.4 2.4 0 0 1 -2.4 2.4 H2.4 a2.4 2.4 0 0 1 -2.4 -2.4Z" fill="url(#fPic)"/><path d="M2.6 31.4 L20 14.6 L39.6 31.6 Z" fill="#f3f7fc"/><circle cx="27.8" cy="10.8" r="2.3" fill="#fff"/></svg>
<svg style="left:455px;top:278px" width="42" height="33" viewBox="0 0 42 33"><defs><linearGradient id="fMus" x1="0" y1="0" x2="1" y2="1"><stop offset="0" stop-color="#f48d54"/><stop offset="1" stop-color="#b45cb4"/></linearGradient></defs><path d="M0 3 a2.4 2.4 0 0 1 2.4 -2.4 H12.6 a3 3 0 0 1 2.2 1 L17.4 4.4 H39.6 a2.4 2.4 0 0 1 2.4 2.4 V12 H0Z" fill="#cf6a1c"/><path d="M0 8.4 H13.4 a3 3 0 0 0 2.2 -1 L17.6 5 H39.6 a2.4 2.4 0 0 1 2.4 2.4 V30.4 a2.4 2.4 0 0 1 -2.4 2.4 H2.4 a2.4 2.4 0 0 1 -2.4 -2.4Z" fill="url(#fMus)"/><path d="M21.6 10 H28.4 V14.4 H24 V24.6 a4 4 0 1 1 -2.4 -3.6Z" fill="#fff"/></svg>
<svg style="left:683px;top:278px" width="42" height="33" viewBox="0 0 42 33"><defs><linearGradient id="fVid" x1="0" y1="0" x2="1" y2="1"><stop offset="0" stop-color="#b870f2"/><stop offset="1" stop-color="#8238d6"/></linearGradient></defs><path d="M0 3 a2.4 2.4 0 0 1 2.4 -2.4 H12.6 a3 3 0 0 1 2.2 1 L17.4 4.4 H39.6 a2.4 2.4 0 0 1 2.4 2.4 V12 H0Z" fill="#8a50c6"/><path d="M0 8.4 H13.4 a3 3 0 0 0 2.2 -1 L17.6 5 H39.6 a2.4 2.4 0 0 1 2.4 2.4 V30.4 a2.4 2.4 0 0 1 -2.4 2.4 H2.4 a2.4 2.4 0 0 1 -2.4 -2.4Z" fill="url(#fVid)"/><path d="M3.4 11.4 h4.4 v4.4 h-4.4z M3.4 18.4 h4.4 v4.4 h-4.4z M3.4 25.4 h4.4 v4.4 h-4.4z M34.2 11.4 h4.4 v4.4 h-4.4z M34.2 18.4 h4.4 v4.4 h-4.4z M34.2 25.4 h4.4 v4.4 h-4.4z" fill="#4a1e8c"/><path d="M15.6 12.4 L29 20.4 L15.6 28.4Z" fill="#f4ecff"/></svg>
<div style="left:277.5px;top:205.84px;font-size:12px;line-height:20px;height:20px;white-space:pre;color:#1a1a1a;letter-spacing:-0.337px;">Desktop</div>
<div style="left:277.5px;top:221.74px;font-size:12px;line-height:20px;height:20px;white-space:pre;color:#6a6a6a;letter-spacing:-0.134px;">Stored locally</div>
<svg style="left:277.5px;top:242.3px" width="11" height="11" viewBox="0 0 11 11"><path transform="translate(8.7 1.9) rotate(45)" d="M-2.6 0 H2.6 V3.8 L3.7 5.6 V6.4 H0.75 V10.4 L0 11.4 L-0.75 10.4 V6.4 H-3.7 V5.6 L-2.6 3.8Z" fill="#8c9398"/></svg>
<div style="left:505.5px;top:205.84px;font-size:12px;line-height:20px;height:20px;white-space:pre;color:#1a1a1a;letter-spacing:-0.133px;">Downloads</div>
<div style="left:505.5px;top:221.74px;font-size:12px;line-height:20px;height:20px;white-space:pre;color:#6a6a6a;letter-spacing:-0.134px;">Stored locally</div>
<svg style="left:505.5px;top:242.3px" width="11" height="11" viewBox="0 0 11 11"><path transform="translate(8.7 1.9) rotate(45)" d="M-2.6 0 H2.6 V3.8 L3.7 5.6 V6.4 H0.75 V10.4 L0 11.4 L-0.75 10.4 V6.4 H-3.7 V5.6 L-2.6 3.8Z" fill="#8c9398"/></svg>
<div style="left:733.5px;top:205.84px;font-size:12px;line-height:20px;height:20px;white-space:pre;color:#1a1a1a;letter-spacing:-0.049px;">Documents</div>
<div style="left:733.5px;top:221.74px;font-size:12px;line-height:20px;height:20px;white-space:pre;color:#6a6a6a;letter-spacing:-0.134px;">Stored locally</div>
<svg style="left:733.5px;top:242.3px" width="11" height="11" viewBox="0 0 11 11"><path transform="translate(8.7 1.9) rotate(45)" d="M-2.6 0 H2.6 V3.8 L3.7 5.6 V6.4 H0.75 V10.4 L0 11.4 L-0.75 10.4 V6.4 H-3.7 V5.6 L-2.6 3.8Z" fill="#8c9398"/></svg>
<div style="left:277.5px;top:269.84px;font-size:12px;line-height:20px;height:20px;white-space:pre;color:#1a1a1a;letter-spacing:-0.293px;">Pictures</div>
<div style="left:277.5px;top:285.74px;font-size:12px;line-height:20px;height:20px;white-space:pre;color:#6a6a6a;letter-spacing:-0.134px;">Stored locally</div>
<svg style="left:277.5px;top:306.3px" width="11" height="11" viewBox="0 0 11 11"><path transform="translate(8.7 1.9) rotate(45)" d="M-2.6 0 H2.6 V3.8 L3.7 5.6 V6.4 H0.75 V10.4 L0 11.4 L-0.75 10.4 V6.4 H-3.7 V5.6 L-2.6 3.8Z" fill="#8c9398"/></svg>
<div style="left:505.5px;top:269.84px;font-size:12px;line-height:20px;height:20px;white-space:pre;color:#1a1a1a;letter-spacing:-0.084px;">Music</div>
<div style="left:505.5px;top:285.74px;font-size:12px;line-height:20px;height:20px;white-space:pre;color:#6a6a6a;letter-spacing:-0.134px;">Stored locally</div>
<svg style="left:505.5px;top:306.3px" width="11" height="11" viewBox="0 0 11 11"><path transform="translate(8.7 1.9) rotate(45)" d="M-2.6 0 H2.6 V3.8 L3.7 5.6 V6.4 H0.75 V10.4 L0 11.4 L-0.75 10.4 V6.4 H-3.7 V5.6 L-2.6 3.8Z" fill="#8c9398"/></svg>
<div style="left:733.5px;top:269.84px;font-size:12px;line-height:20px;height:20px;white-space:pre;color:#1a1a1a;letter-spacing:-0.415px;">Videos</div>
<div style="left:733.5px;top:285.74px;font-size:12px;line-height:20px;height:20px;white-space:pre;color:#6a6a6a;letter-spacing:-0.134px;">Stored locally</div>
<svg style="left:733.5px;top:306.3px" width="11" height="11" viewBox="0 0 11 11"><path transform="translate(8.7 1.9) rotate(45)" d="M-2.6 0 H2.6 V3.8 L3.7 5.6 V6.4 H0.75 V10.4 L0 11.4 L-0.75 10.4 V6.4 H-3.7 V5.6 L-2.6 3.8Z" fill="#8c9398"/></svg>
<svg style="left:227px;top:342px" width="42" height="33" viewBox="0 0 42 33"><defs><linearGradient id="fTk" x1="0" y1="0" x2="0" y2="1"><stop offset="0" stop-color="#ffe692"/><stop offset="1" stop-color="#f8cc4e"/></linearGradient><linearGradient id="fTi" x1="0" y1="0" x2="1" y2="0"><stop offset="0" stop-color="#0e5078"/><stop offset=".45" stop-color="#16304e"/><stop offset=".75" stop-color="#24588c"/><stop offset="1" stop-color="#1a2f5c"/></linearGradient></defs><path d="M0 3 a2.4 2.4 0 0 1 2.4 -2.4 H12.6 a3 3 0 0 1 2.2 1 L17.4 4.4 H39.6 a2.4 2.4 0 0 1 2.4 2.4 V20 H0Z" fill="#eab31f"/><rect x="1.6" y="6.4" width="38.8" height="16" fill="url(#fTi)"/><path d="M1.6 14 C10 9 20 12 28 16 C33 14 37 13 40.4 15 V22.4 H1.6Z" fill="#0c1c30" opacity=".8"/><path d="M0 21 H14.4 a3 3 0 0 0 2.2 -1 L18.4 18 H42 V30.4 a2.4 2.4 0 0 1 -2.4 2.4 H2.4 a2.4 2.4 0 0 1 -2.4 -2.4Z" fill="url(#fTk)"/></svg>
<div style="left:277.5px;top:333.64px;font-size:12px;line-height:20px;height:20px;white-space:pre;color:#1a1a1a;letter-spacing:-0.002px;">touchkeyboard</div>
<div style="left:277.5px;top:349.54px;font-size:12px;line-height:20px;height:20px;white-space:pre;color:#6a6a6a;letter-spacing:-0.099px;">Local Disk (C:)\Win...\Web</div>
<div style="left:204px;top:512px;width:738px;height:26px;background:#cce8ff;border:1px solid #99d1ff"></div>
<div style="left:257.3px;top:514.64px;font-size:12px;line-height:20px;height:20px;white-space:pre;color:#1a1a1a;letter-spacing:-0.283px;">TouchKeyboardThemeDark002</div>
<div style="left:603.4px;top:514.64px;font-size:12px;line-height:20px;height:20px;white-space:pre;color:#1a1a1a;letter-spacing:-0.313px;">1/13/2023 5:54 PM</div>
<div style="left:741.6px;top:514.64px;font-size:12px;line-height:20px;height:20px;white-space:pre;color:#6a6a6a;letter-spacing:-0.031px;">Local Disk (C:)\Wi...\touchkeyboard</div>
<div style="left:257.3px;top:544.64px;font-size:12px;line-height:20px;height:20px;white-space:pre;color:#1a1a1a;letter-spacing:-0.283px;">TouchKeyboardThemeDark003</div>
<div style="left:603.4px;top:544.64px;font-size:12px;line-height:20px;height:20px;white-space:pre;color:#1a1a1a;letter-spacing:-0.313px;">1/13/2023 5:54 PM</div>
<div style="left:741.6px;top:544.64px;font-size:12px;line-height:20px;height:20px;white-space:pre;color:#6a6a6a;letter-spacing:-0.031px;">Local Disk (C:)\Wi...\touchkeyboard</div>
<div style="left:257.3px;top:574.64px;font-size:12px;line-height:20px;height:20px;white-space:pre;color:#1a1a1a;letter-spacing:0.096px;">Bloom</div>
<div style="left:603.4px;top:574.64px;font-size:12px;line-height:20px;height:20px;white-space:pre;color:#1a1a1a;letter-spacing:-0.257px;">11/2/2022 5:02 PM</div>
<div style="left:741.6px;top:574.64px;font-size:12px;line-height:20px;height:20px;white-space:pre;color:#6a6a6a;letter-spacing:-0.108px;">Downloads</div>
<div style="left:257.3px;top:604.64px;font-size:12px;line-height:20px;height:20px;white-space:pre;color:#1a1a1a;letter-spacing:-0.391px;">ViVeTool-v0.2.1</div>
<div style="left:603.4px;top:604.64px;font-size:12px;line-height:20px;height:20px;white-space:pre;color:#1a1a1a;letter-spacing:-0.257px;">11/1/2022 9:50 PM</div>
<div style="left:741.6px;top:604.64px;font-size:12px;line-height:20px;height:20px;white-space:pre;color:#6a6a6a;letter-spacing:-0.108px;">Downloads</div>
<div style="left:257.3px;top:634.69px;font-size:11.86px;line-height:20px;height:20px;white-space:pre;color:#1a1a1a;letter-spacing:-0.420px;">85bb37e2ba65556f7da07047bab330e3534c80a2</div>
<div style="left:603.4px;top:634.64px;font-size:12px;line-height:20px;height:20px;white-space:pre;color:#1a1a1a;letter-spacing:-0.288px;">9/22/2022 11:58 PM</div>
<div style="left:741.6px;top:634.64px;font-size:12px;line-height:20px;height:20px;white-space:pre;color:#6a6a6a;letter-spacing:-0.108px;">Downloads</div>
<div style="left:257.3px;top:664.70px;font-size:11.82px;line-height:20px;height:20px;white-space:pre;color:#1a1a1a;letter-spacing:-0.420px;">0b3ee7663893cae76e9bd310aee59b70d76cc476</div>
<div style="left:603.4px;top:664.64px;font-size:12px;line-height:20px;height:20px;white-space:pre;color:#1a1a1a;letter-spacing:-0.288px;">9/22/2022 11:57 PM</div>
<div style="left:741.6px;top:664.64px;font-size:12px;line-height:20px;height:20px;white-space:pre;color:#6a6a6a;letter-spacing:-0.108px;">Downloads</div>
<div style="left:257.3px;top:694.64px;font-size:12px;line-height:20px;height:20px;white-space:pre;color:#1a1a1a;letter-spacing:-0.163px;">TouchKeyboardThemeLight003</div>
<div style="left:603.4px;top:694.64px;font-size:12px;line-height:20px;height:20px;white-space:pre;color:#1a1a1a;letter-spacing:-0.234px;">6/10/2022 4:40 AM</div>
<div style="left:741.6px;top:694.64px;font-size:12px;line-height:20px;height:20px;white-space:pre;color:#6a6a6a;letter-spacing:-0.031px;">Local Disk (C:)\Wi...\touchkeyboard</div>
<div style="left:257.3px;top:724.64px;font-size:12.0px;line-height:20px;height:20px;white-space:pre;color:#1a1a1a;letter-spacing:-0.420px;">cf5a73fe0f1f4a0cd58a38b04219a0167354f87f</div>
<div style="left:603.4px;top:724.64px;font-size:12px;line-height:20px;height:20px;white-space:pre;color:#1a1a1a;letter-spacing:-0.198px;">6/2/2022 4:55 AM</div>
<div style="left:741.6px;top:724.64px;font-size:12px;line-height:20px;height:20px;white-space:pre;color:#6a6a6a;letter-spacing:-0.108px;">Downloads</div>
<div style="left:257.3px;top:754.64px;font-size:12px;line-height:20px;height:20px;white-space:pre;color:#1a1a1a;letter-spacing:-0.132px;">211128-73493-ConfigContextData</div>
<div style="left:603.4px;top:754.64px;font-size:12px;line-height:20px;height:20px;white-space:pre;color:#1a1a1a;letter-spacing:-0.313px;">5/28/2022 3:30 PM</div>
<div style="left:741.6px;top:754.64px;font-size:12px;line-height:20px;height:20px;white-space:pre;color:#6a6a6a;letter-spacing:-0.108px;">Downloads</div>
<div style="left:257.3px;top:784.64px;font-size:12px;line-height:20px;height:20px;white-space:pre;color:#1a1a1a;letter-spacing:-0.210px;">Research Methodology-20210401_040256-Meeting Recording</div>
<div style="left:603.4px;top:784.64px;font-size:12px;line-height:20px;height:20px;white-space:pre;color:#1a1a1a;letter-spacing:-0.198px;">5/7/2022 5:23 AM</div>
<div style="left:741.6px;top:784.64px;font-size:12px;line-height:20px;height:20px;white-space:pre;color:#6a6a6a;letter-spacing:-0.052px;">A test - Personal\Ak</div>
<div style="left:257.3px;top:814.64px;font-size:12px;line-height:20px;height:20px;white-space:pre;color:#1a1a1a;letter-spacing:-0.163px;">TouchKeyboardThemeLight000</div>
<div style="left:603.4px;top:814.64px;font-size:12px;line-height:20px;height:20px;white-space:pre;color:#1a1a1a;letter-spacing:-0.257px;">5/1/2022 11:31 PM</div>
<div style="left:741.6px;top:814.64px;font-size:12px;line-height:20px;height:20px;white-space:pre;color:#6a6a6a;letter-spacing:-0.031px;">Local Disk (C:)\Wi...\touchkeyboard</div>
<div style="left:224px;top:517px;width:21px;height:12px;background:linear-gradient(100deg,#4e2a22 0%,#7a4434 30%,#8a5040 50%,#5e3026 70%,#6a382c 100%);box-shadow:1px 1px 1.5px rgba(0,0,0,.35)"></div>
<div style="left:224px;top:547px;width:21px;height:12px;background:linear-gradient(160deg,#242c5e 0%,#4a3a6a 22%,#c86a5c 34%,#c22c2c 50%,#a02028 72%,#6e1a22 100%);box-shadow:1px 1px 1.5px rgba(0,0,0,.35)"></div>
<div style="left:224px;top:577px;width:21px;height:12px;background:radial-gradient(ellipse 45% 60% at 50% 58%,#2a62ea 0%,#184ad0 45%,#08205c 85%,#051844 100%);box-shadow:1px 1px 1.5px rgba(0,0,0,.35)"></div>
<svg style="left:225px;top:606px" width="21" height="17" viewBox="0 0 21 17"><path d="M0 1.4 a1.2 1.2 0 0 1 1.2 -1.2 H6.6 L8.6 2.2 H19.8 a1.2 1.2 0 0 1 1.2 1.2 V6 H0Z" fill="#e8b020"/><rect x="0" y="3.2" width="21" height="13.6" rx="1.2" fill="url(#fy)"/><rect x="1" y="7.6" width="20" height="4" fill="#c2aa6c"/><path d="M4 9.6 H21" stroke="#7e7050" stroke-width="1.4" stroke-dasharray="1 1"/><rect x="1.8" y="7.2" width="3" height="7" rx=".8" fill="#dcdcdc" stroke="#8c8c8c" stroke-width=".6"/><circle cx="3.3" cy="12.4" r=".8" fill="#777"/></svg>
<div style="left:224px;top:637px;width:21px;height:12px;background:linear-gradient(90deg,#a83c50 0%,#b84a5c 22%,#7a5cc0 42%,#8a78d0 55%,#4a3060 75%,#6a4048 100%);box-shadow:1px 1px 1.5px rgba(0,0,0,.35)"></div>
<div style="left:224px;top:667px;width:21px;height:12px;background:radial-gradient(ellipse 40% 55% at 48% 50%,#7894a4 0%,#a89438 60%,#8a7a30 100%);box-shadow:1px 1px 1.5px rgba(0,0,0,.35)"></div>
<div style="left:224px;top:697px;width:21px;height:12px;background:linear-gradient(172deg,#7c90bc 0%,#a888a8 25%,#e0645e 50%,#d85656 75%,#c84a4c 100%);box-shadow:1px 1px 1.5px rgba(0,0,0,.35)"></div>
<div style="left:224px;top:727px;width:21px;height:12px;background:linear-gradient(135deg,#183468 0%,#2a5a9c 35%,#c8dcea 50%,#3a90a8 62%,#227c98 100%);box-shadow:1px 1px 1.5px rgba(0,0,0,.35)"></div>
<svg style="left:225px;top:756px" width="21" height="17" viewBox="0 0 21 17"><path d="M0 1.4 a1.2 1.2 0 0 1 1.2 -1.2 H6.6 L8.6 2.2 H19.8 a1.2 1.2 0 0 1 1.2 1.2 V6 H0Z" fill="#e8b020"/><rect x="0" y="3.2" width="21" height="13.6" rx="1.2" fill="url(#fy)"/><rect x="1" y="7.6" width="20" height="4" fill="#c2aa6c"/><path d="M4 9.6 H21" stroke="#7e7050" stroke-width="1.4" stroke-dasharray="1 1"/><rect x="1.8" y="7.2" width="3" height="7" rx=".8" fill="#dcdcdc" stroke="#8c8c8c" stroke-width=".6"/><circle cx="3.3" cy="12.4" r=".8" fill="#777"/></svg>
<svg style="left:207.5px;top:789px" width="12" height="12" viewBox="0 0 12 12"><circle cx="6" cy="6" r="5.1" stroke="#2b8a4a" stroke-width="1.1" fill="#fff"/><path d="M3.5 6.2 L5.3 8 L8.6 4.4" stroke="#2b8a4a" stroke-width="1.1" fill="none"/></svg>
<div style="left:224px;top:787px;width:22px;height:12.5px;background:#f2f2f2;border-left:2px solid #1a1a1a;border-right:2px solid #1a1a1a;border-top:1px solid #d8d8d8;border-bottom:2.5px solid #111;box-shadow:1px 1px 1.5px rgba(0,0,0,.3)"></div>
<div style="left:224px;top:817px;width:21px;height:12px;background:linear-gradient(100deg,#1488ac 0%,#26a8c4 30%,#4cbcd4 48%,#7aa0cc 70%,#a4a6da 100%);box-shadow:1px 1px 1.5px rgba(0,0,0,.35)"></div>
<div style="left:204px;top:840px;width:738px;height:11px;overflow:hidden"><svg style="left:21px;top:6px" width="21" height="17" viewBox="0 0 21 17"><path d="M0 1.4 a1.2 1.2 0 0 1 1.2 -1.2 H6.6 L8.6 2.2 H19.8 a1.2 1.2 0 0 1 1.2 1.2 V6 H0Z" fill="#e8b020"/><rect x="0" y="3.2" width="21" height="13.6" rx="1.2" fill="url(#fy)"/></svg><div style="left:53.3px;top:4.64px;font-size:12px;line-height:20px;height:20px;white-space:pre;color:#1a1a1a;letter-spacing:-0.046px;">OfflineInsiderEnroll-2.6.3</div>
<div style="left:399.4px;top:4.64px;font-size:12px;line-height:20px;height:20px;white-space:pre;color:#1a1a1a;letter-spacing:-0.340px;">4/28/2022 10:55 PM</div>
<div style="left:537.6px;top:4.64px;font-size:12px;line-height:20px;height:20px;white-space:pre;color:#6a6a6a;letter-spacing:-0.108px;">Downloads</div>
</div>
<div style="left:943px;top:165px;width:16px;height:687px;background:#f0f0f0"></div><div style="left:950px;top:182px;width:2px;height:413px;background:#7c7c7c"></div>
<!-- p_prev -->
<div style="left:962px;top:165px;width:1px;height:687px;background:#c6c6c6"></div><div style="left:962px;top:165px;width:446px;height:1px;background:#c6c6c6"></div><div style="left:962px;top:851px;width:446px;height:1px;background:#c6c6c6"></div>
<div style="left:1401px;top:182px;width:2px;height:435px;background:#808080"></div>
<svg style="left:1060px;top:166px" width="250" height="140" viewBox="0 0 250 140"><defs>
<filter id="b3" x="-10%" y="-10%" width="120%" height="120%"><feGaussianBlur stdDeviation="4.5"/></filter>
<filter id="b1" x="-10%" y="-10%" width="120%" height="120%"><feGaussianBlur stdDeviation="1.1"/></filter>
<linearGradient id="pf" x1="0" y1="0" x2="1" y2="0"><stop offset="0" stop-color="#70382a"/><stop offset=".3" stop-color="#5e2a1e"/><stop offset=".6" stop-color="#6a2e20"/><stop offset=".685" stop-color="#a05236"/><stop offset=".74" stop-color="#844430"/><stop offset=".86" stop-color="#664036"/><stop offset="1" stop-color="#54443e"/></linearGradient>
<linearGradient id="pv" x1="0" y1="0" x2="0" y2="1"><stop offset="0" stop-color="#000" stop-opacity=".18"/><stop offset=".15" stop-color="#000" stop-opacity="0"/><stop offset=".85" stop-color="#000" stop-opacity="0"/><stop offset="1" stop-color="#000" stop-opacity=".25"/></linearGradient>
<clipPath id="pclip"><rect width="250" height="140"/></clipPath></defs>
<g clip-path="url(#pclip)"><rect width="250" height="140" fill="#6a4236"/>
<g filter="url(#b3)">
<rect x="-10" y="-10" width="270" height="20" fill="#4a2c24"/>
<path d="M-10 14 L60 16 L150 44 L120 54 L-10 30Z" fill="#944a36"/>
<path d="M60 0 L150 2 L150 30 L100 22Z" fill="#6a4e44"/>
<path d="M130 -5 L260 6 L260 22 L180 12Z" fill="#8a4230"/>
<path d="M190 16 L260 26 L260 60 L215 36Z" fill="#5e3e34"/>
<path d="M-10 38 L26 40 L30 80 L-10 92Z" fill="#c06a52"/>
<path d="M44 50 L120 58 L104 86 L60 92Z" fill="#4a2e2a"/>
<path d="M36 62 L64 58 L50 94 L30 98Z" fill="#9a523e"/>
<path d="M-10 84 L40 92 L20 112 L-10 116Z" fill="#7a4436"/>
<path d="M232 48 L260 62 L260 66 L240 62Z" fill="#9a5c4c"/>
</g>
<path d="M-5 121 C40 108 80 90 112 62 C132 44 146 26 166 20 C186 16 200 30 250 62 L250 145 L-5 145Z" fill="url(#pf)" filter="url(#b1)"/>
<g filter="url(#b3)">
<path d="M120 70 C140 52 150 40 158 34 L156 80 C140 100 110 104 80 102Z" fill="#56221a" opacity=".7"/>
<path d="M196 76 L255 70 L255 116 L210 108Z" fill="#50423c"/><path d="M130 104 L200 96 L255 112 L255 128 L160 122Z" fill="#5c382e" opacity=".75"/>
<path d="M214 92 L255 86 L255 100 L224 100Z" fill="#5e504a"/>
<path d="M50 112 C70 100 90 98 110 102 C150 114 200 126 255 136 L255 146 L120 132 C90 124 60 120 30 126Z" fill="#a85840"/>
<path d="M-5 124 C40 120 90 124 130 134 L130 146 L-5 146Z" fill="#3e2a24"/>
<path d="M30 134 C60 128 100 130 150 140 L30 144Z" fill="#66564e"/>
<path d="M150 130 L255 122 L255 134 L200 136Z" fill="#4a322a" opacity=".6"/>
</g>
<path d="M-5 121 C40 108 80 90 112 62 C132 44 146 26 166 20" stroke="#b87050" stroke-width="1" fill="none" opacity=".5" filter="url(#b1)"/>
<rect width="250" height="140" fill="url(#pv)"/>
</g></svg>
<div style="left:984.5px;top:336.04px;font-size:19.5px;line-height:20px;height:20px;white-space:pre;color:#1a1a1a;-webkit-text-stroke:0.55px #1a1a1a;letter-spacing:0.241px;">TouchKeyboardThemeDark002</div>
<div style="left:984.5px;top:390.15px;font-size:14px;line-height:20px;height:20px;white-space:pre;color:#6a6a6a;letter-spacing:-0.266px;">This item is shared</div>
<div class="btn" style="left:984px;top:422px;width:74px"></div><div class="btn" style="left:1064px;top:422px;width:118px"></div>
<svg style="left:995.6px;top:431.6px" width="13.5" height="12.7" viewBox="0 0 17 16"><path d="M6.4 2.6 H4 a2.4 2.4 0 0 0 -2.4 2.4 V11.4 a2.4 2.4 0 0 0 2.4 2.4 H10.6 a2.4 2.4 0 0 0 2.4 -2.4 V10.8" stroke="#444" stroke-width="1.5" fill="none"/><path d="M9.6 1.6 L15 5.5 L9.6 9.4 V7.3 C7 7.2 5.4 8 4.4 9.8 C4.6 6.6 6.4 4 9.6 3.8 Z" stroke="#444" stroke-width="1.4" fill="none" stroke-linejoin="round"/></svg>
<div style="left:1011.6px;top:428.27px;font-size:13.64px;line-height:20px;height:20px;white-space:pre;color:#2a2a2a;letter-spacing:-0.700px;">Share</div>
<div style="left:1076.7px;top:428.18px;font-size:13.9px;line-height:20px;height:20px;white-space:pre;color:#2a2a2a;letter-spacing:-0.420px;">Manage access</div>
<div style="left:984.3px;top:486.08px;font-size:13.91px;line-height:20px;height:20px;white-space:pre;color:#1a1a1a;-webkit-text-stroke:0.4px #1a1a1a;letter-spacing:0.420px;">Activity</div>
<svg style="left:989px;top:525px" width="14" height="14" viewBox="0 0 18 18"><path d="M9.2 3.6 H3.4 a2 2 0 0 0 -2 2 V12 a2 2 0 0 0 2 2 H9.2 M13.2 3.6 H14.6 a2 2 0 0 1 2 2 V12 a2 2 0 0 1 -2 2 H13.2" stroke="#4a86c0" stroke-width="1.3" fill="none"/><path d="M9.2 1.5 H13.2 M9.2 16.5 H13.2 M11.2 1.5 V16.5" stroke="#4a86c0" stroke-width="1.3" fill="none"/><path d="M3.7 11.7 L6.3 5.6 L8.9 11.7 M4.6 9.7 H8" stroke="#4a86c0" stroke-width="1.3" fill="none"/></svg>
<div style="left:1017px;top:520px;width:369.6px;height:24px;overflow:hidden"><div style="left:0.2px;top:2.04px;font-size:12px;line-height:20px;height:20px;white-space:pre;color:#555;letter-spacing:0.109px;">Laura changed the name from My file to My new file with a long name</div>
</div>
<svg style="left:989.5px;top:554px" width="13" height="12.4" viewBox="0 0 17 16"><path d="M6.4 2.6 H4 a2.4 2.4 0 0 0 -2.4 2.4 V11.4 a2.4 2.4 0 0 0 2.4 2.4 H10.6 a2.4 2.4 0 0 0 2.4 -2.4 V10.8" stroke="#4a86c0" stroke-width="1.4" fill="none"/><path d="M9.6 1.6 L15 5.5 L9.6 9.4 V7.3 C7 7.2 5.4 8 4.4 9.8 C4.6 6.6 6.4 4 9.6 3.8 Z" stroke="#4a86c0" stroke-width="1.3" fill="none" stroke-linejoin="round"/></svg>
<div style="left:1017.2px;top:549.84px;font-size:12px;line-height:20px;height:20px;white-space:pre;color:#555;letter-spacing:-0.003px;">Robert shared yesterday at 2:29pm</div>
<svg style="left:989px;top:582px" width="14" height="12" viewBox="0 0 14 12"><path d="M5 1 L1 5 L5 9 M1.2 5 H7.4 C10.6 5 12.8 7.4 12.8 11" stroke="#4a86c0" stroke-width="1.1" fill="none"/></svg>
<div style="left:1017.2px;top:577.64px;font-size:12px;line-height:20px;height:20px;white-space:pre;color:#555;letter-spacing:0.079px;">Tyler replied to a comment by Edmee on Oct 29</div>
<div class="btn" style="left:984px;top:620px;width:90px"></div>
<div style="left:996.3px;top:626.05px;font-size:14px;line-height:20px;height:20px;white-space:pre;color:#5a5a5a;letter-spacing:-0.060px;">View more</div>
<div style="left:984.3px;top:683.99px;font-size:13.6px;line-height:20px;height:20px;white-space:pre;color:#1a1a1a;-webkit-text-stroke:0.4px #1a1a1a;letter-spacing:-0.064px;">Related Files</div>
<svg style="left:1002px;top:715px" width="20" height="22" viewBox="0 0 20 22"><path d="M3.6 9.6 V3.4 a2 2 0 0 1 2 -2 H10.6 L15.8 6.6 V9.6 M10.4 1.6 V5 a1.8 1.8 0 0 0 1.8 1.8 H15.6 M3.6 17.4 V18.4 a2 2 0 0 0 2 2 H13.8 a2 2 0 0 0 2 -2 V17.4" stroke="#2a2a2a" stroke-width="1.3" fill="none"/><rect x="1.4" y="9.6" width="16.8" height="7.8" rx="1.8" stroke="#2a2a2a" stroke-width="1.3" fill="none"/><text x="9.8" y="15.6" font-family="Liberation Sans, sans-serif" font-size="5" font-weight="700" text-anchor="middle" fill="#2a2a2a">PDF</text></svg>
<div style="left:1039.3px;top:716.45px;font-size:14px;line-height:20px;height:20px;white-space:pre;color:#2a2a2a;letter-spacing:-0.269px;">Company stats press release 2022</div>
<svg style="left:1002px;top:755px" width="22" height="20" viewBox="0 0 22 20"><rect x="1.6" y="1.6" width="19" height="16.8" rx="3.2" stroke="#2a2a2a" stroke-width="1.3" fill="none"/><path d="M8.6 6.4 L14.4 10 L8.6 13.6Z" stroke="#2a2a2a" stroke-width="1.3" fill="none" stroke-linejoin="round"/></svg>
<div style="left:1039.3px;top:755.35px;font-size:14px;line-height:20px;height:20px;white-space:pre;color:#2a2a2a;letter-spacing:-0.224px;">2021 Annual review</div>
<div style="left:984.3px;top:813.09px;font-size:13.6px;line-height:20px;height:20px;white-space:pre;color:#1a1a1a;-webkit-text-stroke:0.4px #1a1a1a;letter-spacing:0.146px;">Related Conversations</div>
<div style="left:1030px;top:840px;width:300px;height:11px;overflow:hidden"><div style="left:9.3px;top:4.68px;font-size:13.05px;line-height:20px;height:20px;white-space:pre;color:#2a2a2a;letter-spacing:-0.420px;">Meeting MDC April: All hands on safety</div>
</div>
<!-- p_status -->
<div style="left:44.4px;top:853.64px;font-size:12px;line-height:20px;height:20px;white-space:pre;color:#1e2748;letter-spacing:-0.250px;">29 items</div>
<div style="left:110.2px;top:853.64px;font-size:12px;line-height:20px;height:20px;white-space:pre;color:#1e2748;letter-spacing:-0.308px;">1 item selected</div>
<div style="left:194.4px;top:853.88px;font-size:11.32px;line-height:20px;height:20px;white-space:pre;color:#1e2748;letter-spacing:-0.420px;">211 KB</div>
<div style="left:98px;top:856px;width:1px;height:15px;background:#ececec"></div><div style="left:239px;top:856px;width:1px;height:15px;background:#ececec"></div>
<svg style="left:1365px;top:857px" width="13" height="12" viewBox="0 0 13 12"><path d="M0.4 1.5 H12.4 M0.4 4.5 H12.4 M0.4 7.5 H12.4 M0.4 10.5 H12.4" stroke="#111" stroke-width="1"/></svg>
<svg style="left:1386px;top:856px" width="14" height="14" viewBox="0 0 14 14"><rect x="1.5" y="1.5" width="11" height="8.6" stroke="#111" stroke-width="1.2" fill="none"/><path d="M1 12.5 H13" stroke="#111" stroke-width="1"/></svg>

</div></div>
</body>
</html>
